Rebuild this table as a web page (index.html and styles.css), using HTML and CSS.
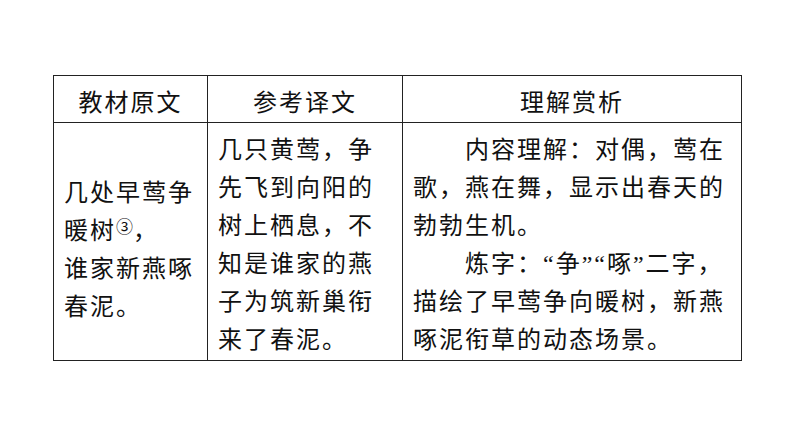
FILE: index.html
```html
<!DOCTYPE html>
<html lang="zh">
<head>
<meta charset="utf-8">
<link rel="stylesheet" href="styles.css">
</head>
<body>
<div class="page">
  <table class="poem">
    <colgroup>
      <col class="c1">
      <col class="c2">
      <col class="c3">
    </colgroup>
    <thead>
      <tr>
        <th>教材原文</th>
        <th>参考译文</th>
        <th>理解赏析</th>
      </tr>
    </thead>
    <tbody>
      <tr>
        <td class="orig">几处早莺争<br>暖树<span class="note">③</span>，<br>谁家新燕啄<br>春泥。</td>
        <td class="trans">几只黄莺，争先飞到向阳的树上栖息，不知是谁家的燕子为筑新巢衔来了春泥。</td>
        <td class="anal"><p>内容理解：对偶，莺在歌，燕在舞，显示出春天的勃勃生机。</p><p>炼字：“争”“啄”二字，描绘了早莺争向暖树，新燕啄泥衔草的动态场景。</p></td>
      </tr>
    </tbody>
  </table>
</div>
</body>
</html>
```

FILE: styles.css
```css
html, body {
  margin: 0;
  padding: 0;
  background: #ffffff;
}
.page {
  padding: 75px 0 0 53px;
}
.poem {
  border-collapse: collapse;
  width: 688px;
  table-layout: fixed;
  font-family: "Liberation Serif", "Noto Sans CJK SC", "Noto Sans CJK JP", sans-serif;
  font-size: 24px;
  letter-spacing: 2px;
  line-height: 38px;
  color: #111;
}
.c1 { width: 154px; }
.c2 { width: 195px; }
.c3 { width: 339px; }
.poem th, .poem td {
  border: 1.5px solid #222;
  padding: 8px 8px 1px 10px;
  vertical-align: top;
  text-align: left;
  font-weight: normal;
}
.poem th {
  text-align: center;
  height: 38px;
  padding-left: 0;
  padding-right: 0;
  padding-top: 8px;
  padding-bottom: 0;
}
.poem td.orig {
  padding-top: 51px;
}
.poem td.trans {
  height: 226px;
}
.poem p {
  margin: 0;
  text-indent: 52px;
}
.note {
  font-family: "Noto Sans CJK SC", sans-serif;
  font-size: 17px;
  vertical-align: 6px;
  letter-spacing: 0;
  line-height: 0;
}
```
